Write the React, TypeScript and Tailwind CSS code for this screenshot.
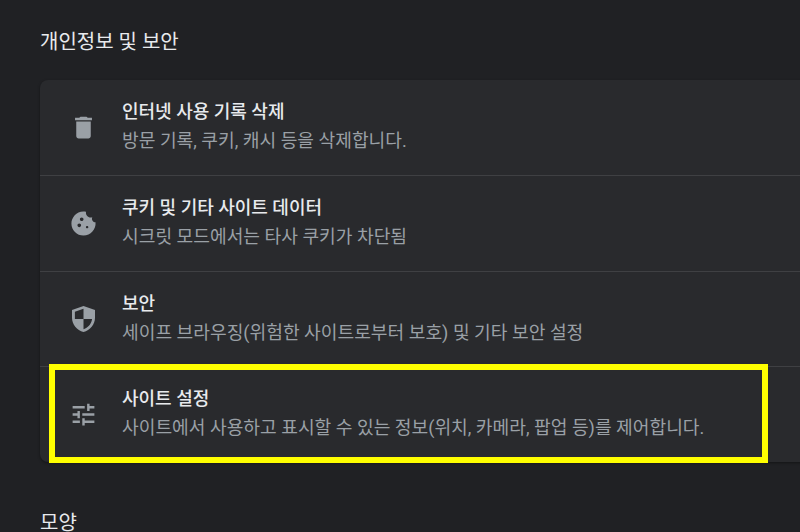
import { ReactNode } from 'react';

const font = "font-['Roboto','Noto_Sans_CJK_KR',sans-serif]";

const rows: { title: string; sub: string; icon: ReactNode }[] = [
  {
    title: '인터넷 사용 기록 삭제',
    sub: '방문 기록, 쿠키, 캐시 등을 삭제합니다.',
    icon: (
      <svg viewBox="0 0 24 24" className="w-[29px] h-[29px]" fill="#9aa0a6">
        <path d="M6 19c0 1.1.9 2 2 2h8c1.1 0 2-.9 2-2V7H6v12zM19 4h-3.5l-1-1h-5l-1 1H5v2h14V4z" />
      </svg>
    ),
  },
  {
    title: '쿠키 및 기타 사이트 데이터',
    sub: '시크릿 모드에서는 타사 쿠키가 차단됨',
    icon: (
      <svg viewBox="0 0 24 24" className="w-[29px] h-[29px]" fill="#9aa0a6">
        <path d="M21.95 10.99c-1.79-.03-3.7-1.95-2.68-4.22-2.97 1-5.78-1.59-5.19-4.56C7.11.74 2 6.41 2 12c0 5.52 4.48 10 10 10 5.89 0 10.54-5.08 9.95-11.01zM8.5 15c-.83 0-1.5-.67-1.5-1.5S7.67 12 8.5 12s1.5.67 1.5 1.5S9.33 15 8.5 15zm2-5C9.67 10 9 9.33 9 8.5S9.67 7 10.5 7s1.5.67 1.5 1.5-.67 1.5-1.5 1.5zm4.5 6c-.55 0-1-.45-1-1s.45-1 1-1 1 .45 1 1-.45 1-1 1z" />
      </svg>
    ),
  },
  {
    title: '보안',
    sub: '세이프 브라우징(위험한 사이트로부터 보호) 및 기타 보안 설정',
    icon: (
      <svg viewBox="4 2 16 20" preserveAspectRatio="none" className="w-[23px] h-[26px]" fill="#9aa0a6">
        <path d="M12 2 4 5v6.09c0 5.05 3.41 9.76 8 10.91 4.59-1.15 8-5.86 8-10.91V5l-8-3zm6 9.09c0 4-2.55 7.7-6 8.83V12H6V6.39l6-2.25V12h6v-.91z" />
      </svg>
    ),
  },
  {
    title: '사이트 설정',
    sub: '사이트에서 사용하고 표시할 수 있는 정보(위치, 카메라, 팝업 등)를 제어합니다.',
    icon: (
      <svg viewBox="0 0 24 24" className="w-[29px] h-[29px]" fill="#9aa0a6">
        <path d="M3 17v2h6v-2H3zM3 5v2h10V5H3zm10 16v-2h8v-2h-8v-2h-2v6h2zM7 9v2H3v2h4v2h2V9H7zm14 4v-2H11v2h10zm-6-4h2V7h4V5h-4V3h-2v6z" />
      </svg>
    ),
  },
];

export default function App() {
  return (
    <div className={`relative w-[800px] h-[532px] overflow-hidden bg-[#202124] ${font}`}>
      <div className="pl-10 pt-[28px]">
        <h2 className="text-[20px] leading-[29px] text-[#e8eaed] font-normal">개인정보 및 보안</h2>

        {/* Card */}
        <div className="mt-[23px] w-[790px] rounded-lg bg-[#292a2d] shadow-[0_1px_3px_rgba(0,0,0,0.4)]">
          {rows.map((row, i) => (
            <div
              key={row.title}
              className={`flex items-center ${i > 0 ? 'h-[95.5px] border-t border-[#3f4043]' : 'h-[95px]'}`}
            >
              <div className="w-[82px] flex justify-center pl-[4px] shrink-0">{row.icon}</div>
              <div className={i > 0 ? 'pb-[1px]' : 'pb-[3px]'}>
                <div className="text-[18px] leading-[29px] text-[#e8eaed] font-medium">{row.title}</div>
                <div className="text-[18.15px] leading-[30px] text-[#9aa0a6]">{row.sub}</div>
              </div>
            </div>
          ))}
        </div>

        <h2 className="mt-[47px] text-[20px] leading-[29px] text-[#e8eaed] font-normal">모양</h2>
      </div>

      {/* Highlight */}
      <div className="absolute left-[49px] top-[364px] w-[719px] h-[99px] border-[6px] border-[#ffff00]" />
    </div>
  );
}
